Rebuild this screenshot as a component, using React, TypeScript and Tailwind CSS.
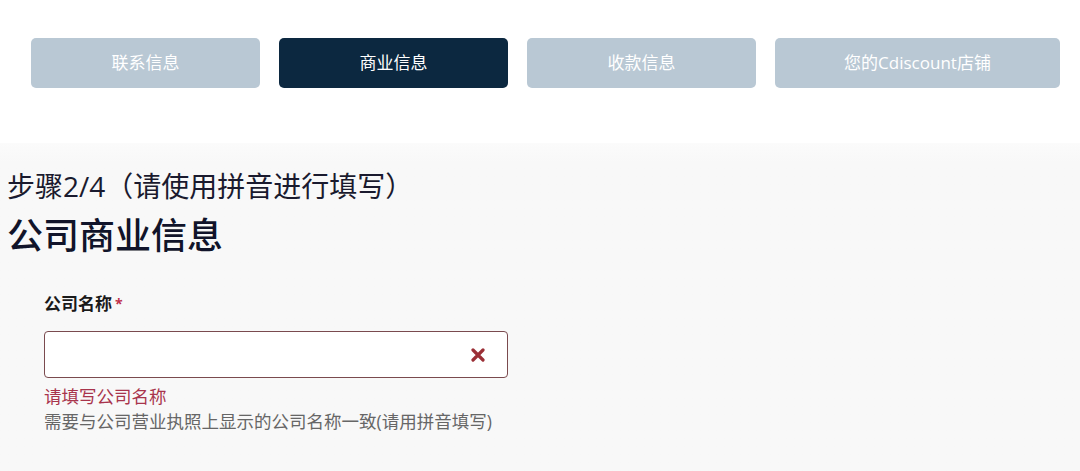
import React from 'react'

const font = { fontFamily: '"Open Sans", "Noto Sans CJK SC", sans-serif' }

const steps = [
    { label: '联系信息', active: false, width: 'w-[229px]' },
    { label: '商业信息', active: true, width: 'w-[229px]' },
    { label: '收款信息', active: false, width: 'w-[229px]' },
    { label: '您的Cdiscount店铺', active: false, width: 'w-[285px]' },
]

function StepTab({ label, active, width }: { label: string; active: boolean; width: string }) {
    return (
        <div
            className={
                active
                    ? `${width} h-[50px] rounded-[5px] bg-[#0c2840] flex items-center justify-center text-white text-[17px]`
                    : `${width} h-[50px] rounded-[5px] bg-[#b9c8d4] flex items-center justify-center text-white text-[17px]`
            }
        >
            {label}
        </div>
    )
}

export default function App() {
    return (
        <div className="w-[1080px] h-[471px] bg-white overflow-hidden" style={font}>
            <div className="h-[143px] pt-[38px] pl-[31px] flex flex-row gap-[19px]">
                {steps.map((s) => (
                    <StepTab key={s.label} label={s.label} active={s.active} width={s.width} />
                ))}
            </div>
            <div className="h-[328px] bg-[#f8f8f8] bg-gradient-to-b from-[#fbfbfb] to-[#f8f8f8] from-0% to-[6%] pl-[7px] pt-[26px]">
                <div className="text-[28px] leading-[34px] text-[#1a1a2e]">步骤2/4（请使用拼音进行填写）</div>
                <div className="mt-[9px] text-[36px] leading-[48px] text-[#11142a] font-medium">公司商业信息</div>
                <div className="pl-[37px] pt-[32px]">
                    <div className="text-[17px] leading-[24px] font-bold text-[#1a1a1a]">
                        公司名称<span className="text-[#c0304a] text-[14px] align-top ml-[3px]">*</span>
                    </div>
                    <div className="mt-[15px] w-[464px] h-[47px] bg-white border border-[#7a4a4e] rounded-[4px] flex items-center justify-end pr-[22px]">
                        <svg width="14" height="14" viewBox="0 0 14 14">
                            <path d="M2 2 L12 12 M12 2 L2 12" stroke="#9b2f36" strokeWidth="3.2" strokeLinecap="round" />
                        </svg>
                    </div>
                    <div className="mt-[6px] text-[17.5px] leading-[25px] text-[#a8344c]">请填写公司名称</div>
                    <div className="text-[17.5px] leading-[25px] text-[#666666]">
                        需要与公司营业执照上显示的公司名称一致(请用拼音填写)
                    </div>
                </div>
            </div>
        </div>
    )
}
